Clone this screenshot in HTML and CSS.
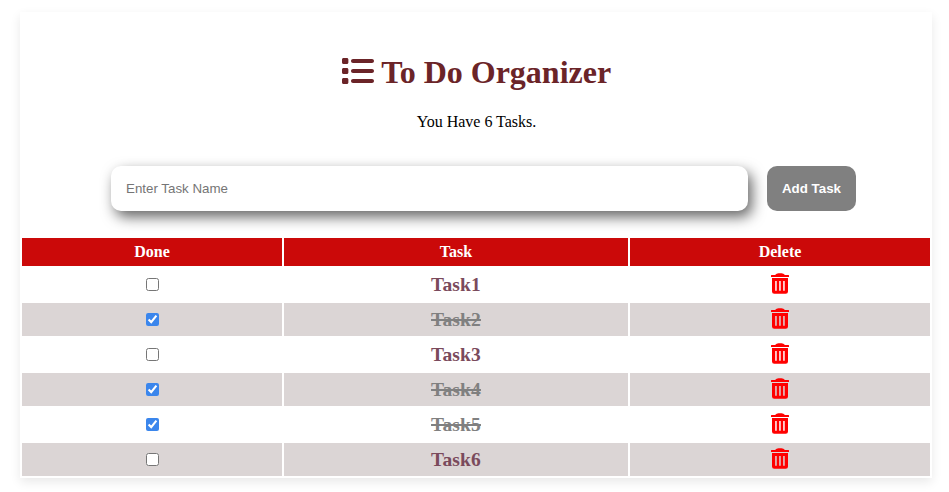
FILE: index.html
```html
<!DOCTYPE html>
<html lang="en">
<head>
<meta charset="utf-8">
<title>To Do Organizer</title>
<link rel="stylesheet" href="styles.css">
</head>
<body>
<svg class="defs" width="0" height="0" aria-hidden="true">
<symbol id="trash" viewBox="0 0 18 21" preserveAspectRatio="none"><path fill-rule="evenodd" d="M.5 2H4Q5.500.2 7.500.2h3Q12.500.2 14 2h3.500q.5 0 .5.500V4H0V2.500Q0 2 .5 2zM1 5h16v13.500q0 2.300-2.300 2.300H3.300Q1 20.800 1 18.500zM4.200 8v9.800h1.500V8zM8.200 8v9.800h1.500V8zM12.200 8v9.800h1.500V8z"/></symbol>
</svg>
<main class="container">
<h1 class="title"><svg class="list-icon" viewBox="0 0 512 512"><path d="M24 48C10.700 48 0 58.700 0 72v48c0 13.300 10.700 24 24 24H78c13.300 0 24-10.700 24-24V72c0-13.300-10.700-24-24-24H24zM176 64c-17.700 0-32 14.300-32 32s14.300 32 32 32H480c17.700 0 32-14.300 32-32s-14.300-32-32-32H176zm0 160c-17.700 0-32 14.300-32 32s14.300 32 32 32H480c17.700 0 32-14.300 32-32s-14.300-32-32-32H176zm0 160c-17.700 0-32 14.300-32 32s14.300 32 32 32H480c17.700 0 32-14.300 32-32s-14.300-32-32-32H176zM0 232v48c0 13.300 10.700 24 24 24H78c13.300 0 24-10.700 24-24V232c0-13.300-10.700-24-24-24H24c-13.300 0-24 10.700-24 24zM24 368c-13.300 0-24 10.700-24 24v48c0 13.300 10.700 24 24 24H78c13.300 0 24-10.700 24-24V392c0-13.300-10.700-24-24-24H24z"/></svg> To Do Organizer</h1>
<p class="count">You Have 6 Tasks.</p>
<div class="entry"><input class="task-input" type="text" placeholder="Enter Task Name"><button class="add">Add Task</button></div>
<table class="tasks">
<colgroup><col class="c1"><col class="c2"><col class="c3"></colgroup>
<thead><tr><th>Done</th><th>Task</th><th>Delete</th></tr></thead>
<tbody>
<tr><td><input type="checkbox"></td><td class="name">Task1</td><td><svg class="trash"><use href="#trash"/></svg></td></tr>
<tr><td><input type="checkbox" checked></td><td class="name done">Task2</td><td><svg class="trash"><use href="#trash"/></svg></td></tr>
<tr><td><input type="checkbox"></td><td class="name">Task3</td><td><svg class="trash"><use href="#trash"/></svg></td></tr>
<tr><td><input type="checkbox" checked></td><td class="name done">Task4</td><td><svg class="trash"><use href="#trash"/></svg></td></tr>
<tr><td><input type="checkbox" checked></td><td class="name done">Task5</td><td><svg class="trash"><use href="#trash"/></svg></td></tr>
<tr><td><input type="checkbox"></td><td class="name">Task6</td><td><svg class="trash"><use href="#trash"/></svg></td></tr>
</tbody>
</table>
</main>
</body>
</html>
```
FILE: styles.css
```css
body { margin: 0; min-height: 492px; background: #fff; font-family: "Liberation Serif", serif; font-size: 16px; }
.defs { display: block; }
.container { box-sizing: border-box; width: 912px; height: 466px; margin: 12px 0 0 20px; padding-top: 42px; text-align: center; box-shadow: 0 4px 10px rgba(0,0,0,.09); }
.title { margin: 0; padding-left: 1px; font-size: 32px; line-height: 37px; color: #6b2428; }
.list-icon { width: 32px; height: 32px; vertical-align: -4px; fill: currentColor; }
.count { margin: 22px 0 0; padding-left: 1px; line-height: 18px; }
.entry { display: flex; gap: 19px; margin: 35px 0 0 91px; }
.task-input { box-sizing: border-box; width: 637px; height: 45px; padding: 0 14px 0 15px; border: 0; border-radius: 10px; box-shadow: 4px 6px 14px #666; font: 13.333px "Liberation Sans", sans-serif; }
.add { width: 89px; height: 45px; padding: 0; border: 0; border-radius: 10px; background: #808080; color: #fff; font: bold 13.333px "Liberation Sans", sans-serif; }
.tasks { width: 912px; margin-top: 25px; table-layout: fixed; border-spacing: 2px; }
.c1 { width: 260px; }
.c2 { width: 344px; }
.c3 { width: 300px; }
th { height: 28px; padding: 0; background: #cb0909; color: #fff; }
td { height: 33px; padding: 0; }
tbody tr:nth-child(even) td { background: #dbd5d5; }
td input { display: block; width: 13px; height: 13px; margin: 0 auto; accent-color: #3b86ec; }
.name { color: #7a4a5c; font-size: 19.5px; letter-spacing: .15px; line-height: 22px; font-weight: bold; }
.done { color: gray; text-decoration: line-through 2px; }
.trash { display: block; width: 18px; height: 21px; margin: 0 auto 3px; fill: red; }
```
